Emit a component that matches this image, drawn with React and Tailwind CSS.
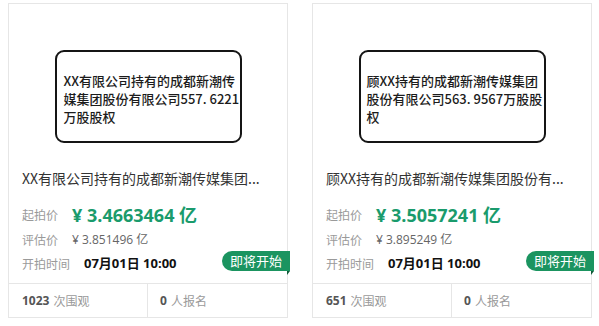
import React from "react";

function Card({ lines, boxPad, title, price, est, views }) {
  return (
    <div className="relative w-[280px] h-[315px] shrink-0 border border-[#e6e6e6] bg-white flex flex-col">
      <div className="h-[154px] flex justify-center pt-[46px]">
        <div
          className={`w-[187px] h-[93px] border-2 border-[#151515] rounded-[9px] pt-[20px] text-[13px] leading-[18px] font-medium text-[#1c1c1c] whitespace-nowrap ${boxPad}`}
        >
          {lines.map((l, i) => (
            <div key={i} className="h-[18px]">{l}</div>
          ))}
        </div>
      </div>
      <div className="mt-[10px] pl-[13px] h-[20px] leading-[20px] text-[14px] text-[#333] whitespace-nowrap">
        {title}
      </div>
      <div className="mt-[15px] pl-[13px] flex flex-col">
        <div className="h-[24px] flex items-center">
          <span className="w-[50px] text-[12px] text-[#9a9a9a]">起拍价</span>
          <span className="text-[18px] font-bold text-[#1a9b6c] font-['Open_Sans','Noto_Sans_CJK_SC',sans-serif]">
            ¥ {price} 亿
          </span>
        </div>
        <div className="mt-[3px] h-[20px] flex items-center">
          <span className="w-[50px] text-[12px] text-[#9a9a9a]">评估价</span>
          <span className="text-[12px] text-[#666] font-['Open_Sans','Noto_Sans_CJK_SC',sans-serif]">
            ¥ {est} 亿
          </span>
        </div>
        <div className="mt-[4px] h-[20px] flex items-center">
          <span className="w-[62px] text-[12px] text-[#9a9a9a]">开拍时间</span>
          <span className="text-[13px] font-bold text-[#111] font-['Open_Sans','Noto_Sans_CJK_SC',sans-serif]">
            07月01日 10:00
          </span>
        </div>
      </div>
      <div className="mt-auto h-[34px] border-t border-[#e6e6e6] grid grid-cols-2">
        <div className="border-r border-[#e6e6e6] pl-[13px] flex items-center text-[12px]">
          <span className="font-bold text-[#555] font-['Open_Sans',sans-serif]">{views}</span>
          <span className="ml-[4px] text-[#9a9a9a]">次围观</span>
        </div>
        <div className="pl-[12px] flex items-center text-[12px]">
          <span className="font-bold text-[#555] font-['Open_Sans',sans-serif]">0</span>
          <span className="ml-[4px] text-[#9a9a9a]">人报名</span>
        </div>
      </div>
      <div className="absolute top-[247px] right-[-3px] h-[20px] w-[68px] rounded-l-full bg-[#1b9460] text-white text-[13px] flex items-center justify-center">
        即将开始
        <div className="absolute right-0 top-full w-0 h-0 border-t-[4px] border-t-[#0e5a38] border-r-[3px] border-r-transparent" />
      </div>
    </div>
  );
}

export default function App() {
  return (
    <div className="w-[599px] h-[326px] bg-white flex gap-[24px] pl-[8px] pt-[3px] overflow-hidden font-['Noto_Sans_CJK_SC',sans-serif]">
      <Card
        lines={["XX有限公司持有的成都新潮传", "媒集团股份有限公司557. 6221", "万股股权"]}
        boxPad="pl-[7px]"
        title="XX有限公司持有的成都新潮传媒集团..."
        price="3.4663464"
        est="3.851496"
        views="1023"
      />
      <Card
        lines={["顾XX持有的成都新潮传媒集团", "股份有限公司563. 9567万股股", "权"]}
        boxPad="pl-[6px]"
        title="顾XX持有的成都新潮传媒集团股份有..."
        price="3.5057241"
        est="3.895249"
        views="651"
      />
    </div>
  );
}
